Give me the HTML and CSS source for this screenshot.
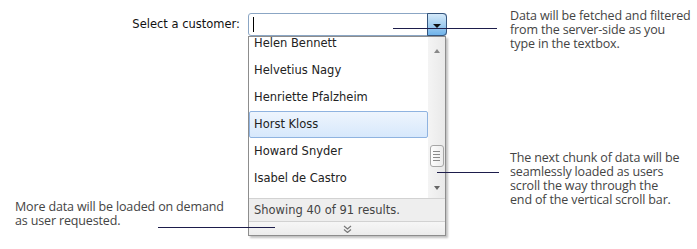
FILE: index.html
```html
<!DOCTYPE html>
<html lang="en">
<head>
    <meta charset="UTF-8">
    <meta name="viewport" content="width=device-width, initial-scale=1.0">
    <title>Load on Demand ComboBox</title>
    <link rel="stylesheet" href="styles.css">
</head>
<body>
    <div class="stage">
        <div class="left-col">
            <label class="combo-label" for="customer">Select a customer:</label>
            <p class="note note-bottom">More data will be loaded on demand<br>as user requested.</p>
        </div>

        <div class="combo">
            <div class="combo-input">
                <input type="text" id="customer" value="">
                <span class="caret"></span>
                <button class="drop-btn" type="button"><span class="arrow-down"></span></button>
            </div>
            <div class="popup">
                <div class="list-wrap">
                    <ul class="items">
                        <li>Helen Bennett</li>
                        <li>Helvetius Nagy</li>
                        <li>Henriette Pfalzheim</li>
                        <li class="selected">Horst Kloss</li>
                        <li>Howard Snyder</li>
                        <li>Isabel de Castro</li>
                        <li></li>
                    </ul>
                    <div class="scrollbar">
                        <span class="sb-up"></span>
                        <span class="sb-thumb"><i></i><i></i><i></i><i></i></span>
                        <span class="sb-down"></span>
                    </div>
                </div>
                <div class="status">Showing 40 of 91 results.</div>
                <div class="more">
                    <svg width="9" height="8" viewBox="0 0 9 8"><path d="M1 1l3.5 3 3.5-3M1 4.5l3.5 3 3.5-3" fill="none" stroke="#777" stroke-width="1.2"/></svg>
                </div>
            </div>
        </div>

        <div class="right-col">
            <p class="note">Data will be fetched and filtered<br>from the server-side as you<br>type in the textbox.</p>
            <p class="note note-scroll">The next chunk of data will be<br>seamlessly loaded as users<br>scroll the way through the<br>end of the vertical scroll bar.</p>
        </div>

        <!-- callout lines -->
        <span class="line line-type"></span>
        <span class="line line-scroll"></span>
        <span class="line line-more"></span>
    </div>
</body>
</html>
```

FILE: styles.css
```css
body {
    margin: 0;
    background-color: #fff;
    font-family: "DejaVu Sans", Verdana, sans-serif;
}
.stage {
    position: relative;
    display: grid;
    grid-template-columns: 248px 200px 1fr;
    height: 249px;
    overflow: hidden;
}
.left-col {
    display: flex;
    flex-direction: column;
    justify-content: space-between;
}
.combo-label {
    align-self: flex-end;
    margin: 17px 8px 0 0;
    font-size: 11.5px;
    color: #111;
}
.note {
    margin: 0;
    font-family: "Open Sans", sans-serif;
    font-size: 12.5px;
    line-height: 14px;
    color: #444;
    letter-spacing: -0.15px;
}
.note-bottom {
    padding-left: 15px;
    margin-bottom: 21px;
}
.right-col {
    padding: 9px 0 0 62px;
}
.note-scroll {
    margin-top: 100px;
}

/* combobox */
.combo-input {
    position: relative;
    margin-top: 13px;
    height: 23px;
    width: 199px;
    box-sizing: border-box;
    border: 1px solid #8ba6c4;
    border-radius: 3px;
    display: flex;
    background: #fff;
}
.combo-input input {
    border: none;
    outline: none;
    flex: 1;
    min-width: 0;
    padding: 0 4px;
    font: inherit;
    background: transparent;
}
.caret {
    position: absolute;
    left: 4px;
    top: 3px;
    width: 1px;
    height: 15px;
    background: #000;
}
.drop-btn {
    width: 20px;
    margin: -1px -1px -1px 0;
    padding: 0;
    border: 1px solid #35557d;
    border-radius: 0 4px 4px 0;
    background: linear-gradient(#d4e9f9, #a5cff0 50%, #6fb3ea);
    display: flex;
    align-items: center;
    justify-content: center;
}
.arrow-down {
    width: 0;
    height: 0;
    border-left: 4px solid transparent;
    border-right: 4px solid transparent;
    border-top: 4px solid #111;
    margin-top: 2px;
}
.popup {
    width: 198px;
    box-sizing: border-box;
    border: 1px solid #8d8d8d;
    background: #fff;
    box-shadow: 2px 2px 2px rgba(0, 0, 0, 0.25);
}
.list-wrap {
    display: flex;
    height: 161px;
    overflow: hidden;
}
.items {
    flex: 1;
    list-style: none;
    margin: -7px 0 0;
    padding: 0;
}
.items li {
    height: 27px;
    line-height: 27px;
    padding-left: 5px;
    font-size: 11.5px;
    color: #222;
    box-sizing: border-box;
}
.items li.selected {
    border: 1px solid #8fb3e0;
    border-radius: 2px;
    line-height: 25px;
    padding-left: 4px;
    background: linear-gradient(#eef5fd, #d7e8fc);
}
.scrollbar {
    width: 17px;
    background: linear-gradient(90deg, #f4f4f4, #e9e9e9);
    display: flex;
    flex-direction: column;
    align-items: center;
}
.sb-up, .sb-down {
    width: 0;
    height: 0;
    border-left: 3.5px solid transparent;
    border-right: 3.5px solid transparent;
}
.sb-up {
    margin-top: 12px;
    border-bottom: 4px solid #888;
}
.sb-down {
    margin-top: 19px;
    border-top: 4px solid #666;
}
.sb-thumb {
    margin-top: 92px;
    width: 14px;
    height: 22px;
    box-sizing: border-box;
    border: 1px solid #a6a6a6;
    border-radius: 3px;
    background: linear-gradient(90deg, #fdfdfd, #ececec);
    display: flex;
    flex-direction: column;
    align-items: center;
    justify-content: center;
    gap: 2px;
}
.sb-thumb i {
    width: 7px;
    height: 1px;
    background: #8a8a8a;
}
.status {
    height: 23px;
    line-height: 22px;
    box-sizing: border-box;
    border-top: 1px solid #d2d2d2;
    padding-left: 5px;
    font-size: 11.5px;
    color: #444;
    background: #eeeeee;
}
.more {
    height: 13px;
    border-top: 1px solid #d2d2d2;
    background: linear-gradient(#f6f6f6, #ececec);
    display: flex;
    align-items: center;
    justify-content: center;
}

/* callout lines drawn over the picture */
.line {
    position: absolute;
    height: 1px;
    background: #1d1d4b;
}
.line-type {
    left: 393px;
    top: 28px;
    width: 104px;
}
.line-scroll {
    left: 437px;
    top: 172px;
    width: 62px;
}
.line-more {
    left: 158px;
    top: 227px;
    width: 117px;
}
```
